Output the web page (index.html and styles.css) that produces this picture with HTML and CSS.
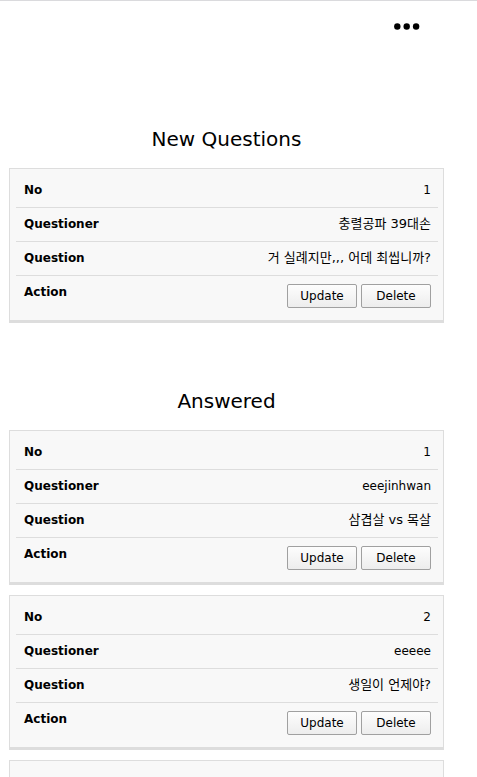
FILE: index.html
```html
<!DOCTYPE html>
<html lang="ko">
<head>
<meta charset="utf-8">
<meta name="viewport" content="width=device-width, initial-scale=1">
<title>Questions</title>
<link rel="stylesheet" href="styles.css">
</head>
<body>
<header class="topbar">
  <button class="menu" type="button" aria-label="Menu">
    <svg width="26" height="8" viewBox="0 0 26 8" aria-hidden="true">
      <circle cx="3.3" cy="3.5" r="3.2"/><circle cx="12.7" cy="3.5" r="3.2"/><circle cx="22.1" cy="3.5" r="3.2"/>
    </svg>
  </button>
</header>
<main class="content">
  <section class="group">
    <h2 class="title">New Questions</h2>
    <div class="card">
      <table class="record">
        <tr><th scope="row">No</th><td>1</td></tr>
        <tr><th scope="row">Questioner</th><td class="hangul">충렬공파 39대손</td></tr>
        <tr><th scope="row">Question</th><td class="hangul">거 실례지만,,, 어데 최씹니까?</td></tr>
        <tr><th scope="row">Action</th><td><div class="actions"><button class="btn" type="button">Update</button><button class="btn" type="button">Delete</button></div></td></tr>
      </table>
    </div>
  </section>
  <section class="group">
    <h2 class="title">Answered</h2>
    <div class="card">
      <table class="record">
        <tr><th scope="row">No</th><td>1</td></tr>
        <tr><th scope="row">Questioner</th><td>eeejinhwan</td></tr>
        <tr><th scope="row">Question</th><td class="hangul">삼겹살 vs 목살</td></tr>
        <tr><th scope="row">Action</th><td><div class="actions"><button class="btn" type="button">Update</button><button class="btn" type="button">Delete</button></div></td></tr>
      </table>
    </div>
    <div class="card">
      <table class="record">
        <tr><th scope="row">No</th><td>2</td></tr>
        <tr><th scope="row">Questioner</th><td>eeeee</td></tr>
        <tr><th scope="row">Question</th><td class="hangul">생일이 언제야?</td></tr>
        <tr><th scope="row">Action</th><td><div class="actions"><button class="btn" type="button">Update</button><button class="btn" type="button">Delete</button></div></td></tr>
      </table>
    </div>
    <div class="card card-empty"></div>
  </section>
</main>
</body>
</html>
```
FILE: styles.css
```css
* { box-sizing: border-box; }
html { scrollbar-width: none; }
body {
  margin: 0;
  background: #fff;
  color: #000;
  font: 12px/16px "DejaVu Sans", "Noto Sans CJK KR", sans-serif;
}
.topbar {
  display: flex;
  justify-content: flex-end;
  border-top: 1px solid #dadadd;
  padding: 16px 52px 0 0;
  height: 124px;
}
.menu {
  display: flex;
  align-items: center;
  height: 20px;
  padding: 0 5px;
  border: 0;
  background: none;
  cursor: pointer;
}
.content { padding: 0 33px 0 9px; }
.group { margin-bottom: 63px; }
.group:last-child { margin-bottom: 0; }
.title {
  margin: 0 0 14px;
  font-size: 20px;
  line-height: 30px;
  font-weight: 400;
  text-align: center;
}
.card {
  margin-bottom: 10px;
  padding: 5px 5px 5px 6px;
  border: 1px solid #ddd;
  border-bottom-width: 3px;
  background: #f8f8f8;
}
.card:last-child { margin-bottom: 0; }
.card-empty { min-height: 24px; }
.record {
  width: 100%;
  border-spacing: 0;
}
.record th,
.record td {
  padding: 8px 7px 9px;
  border-bottom: 1px solid #ddd;
  vertical-align: top;
}
.record th { padding-left: 8px; text-align: left; font-weight: 700; }
.record td { text-align: right; }
.record .hangul { font-size: 13px; }
.record tr:nth-child(4) > * { padding-bottom: 7px; border-bottom: 0; }
.actions {
  display: flex;
  justify-content: flex-end;
  gap: 4px;
}
.btn {
  width: 70px;
  height: 24px;
  padding: 0;
  border: 1px solid #a0a0a0;
  border-radius: 2px;
  background: linear-gradient(#fdfdfd, #ededed);
  color: #000;
  font: inherit;
  cursor: pointer;
}
```
